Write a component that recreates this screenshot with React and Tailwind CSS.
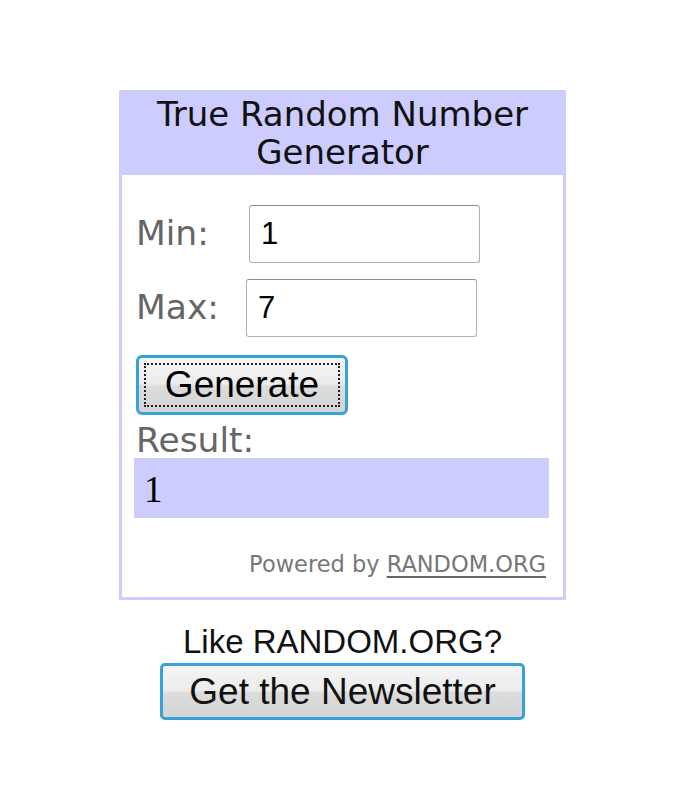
export default function App() {
  const verdana = { fontFamily: '"DejaVu Sans", Verdana, sans-serif' };
  const arial = { fontFamily: '"Liberation Sans", Arial, sans-serif' };
  return (
    <div className="w-[685px] h-[800px] bg-white flex flex-col items-center pt-[90px]">
      <div className="w-[447px] border-[3px] border-t-0 border-[#ccccff]" style={verdana}>
        <div className="bg-[#ccccff] -mx-[3px] px-1 pt-[5px] pb-[4px] text-center text-[34px] leading-[38px] text-[#111]">
          True Random Number Generator
        </div>
        <div className="pl-[14px] pr-[14px] pt-[30px] pb-[19px]">
          <div className="flex items-center h-[58px]">
            <span className="text-[34.5px] text-[#666] w-[113px] whitespace-nowrap">Min:</span>
            <div className="w-[231px] h-[58px] border border-[#b0b0b0] border-t-[#8f8f8f] rounded-[3px] flex items-center pl-[11px] text-[31px] text-black" style={arial}>1</div>
          </div>
          <div className="flex items-center h-[58px] mt-[16px]">
            <span className="text-[34.5px] text-[#666] w-[110px] whitespace-nowrap">Max:</span>
            <div className="w-[231px] h-[58px] border border-[#b0b0b0] border-t-[#8f8f8f] rounded-[3px] flex items-center pl-[11px] text-[31px] text-black" style={arial}>7</div>
          </div>
          <div className="mt-[18px] w-[212px] h-[60px] rounded-[6px] border-[3px] border-[#3aa0d8] bg-[linear-gradient(#f4f4f4_0%,#ececec_48%,#dcdcdc_52%,#d4d4d4_100%)] p-[5px]">
            <div className="w-full h-full border-2 border-dotted border-[#222] flex items-center justify-center text-[37px] text-black" style={arial}>Generate</div>
          </div>
          <div className="text-[34.5px] text-[#666] leading-[36px] mt-[7px] whitespace-nowrap">Result:</div>
          <div className="bg-[#ccccff] h-[60px] -ml-[2px] w-[415px] flex items-center pl-[10px] pt-[4px] text-[37px] text-black" style={{ fontFamily: '"Liberation Serif", "Times New Roman", serif' }}>1</div>
          <div className="text-right text-[22.5px] leading-[28px] text-[#777] mt-[32px] pr-[3px] whitespace-nowrap">
            Powered by <span className="underline decoration-[#666] decoration-2 underline-offset-[4px]">RANDOM.ORG</span>
          </div>
        </div>
      </div>
      <div className="mt-[23px] text-[33px] leading-[38px] text-[#111]" style={arial}>Like RANDOM.ORG?</div>
      <div className="mt-[2px] w-[365px] h-[57px] rounded-[5px] border-[3px] border-[#3aa0d8] bg-[linear-gradient(#f4f4f4_0%,#ececec_48%,#dcdcdc_52%,#d4d4d4_100%)] flex items-center justify-center text-[37px] text-[#111]" style={arial}>
        Get the Newsletter
      </div>
    </div>
  );
}
